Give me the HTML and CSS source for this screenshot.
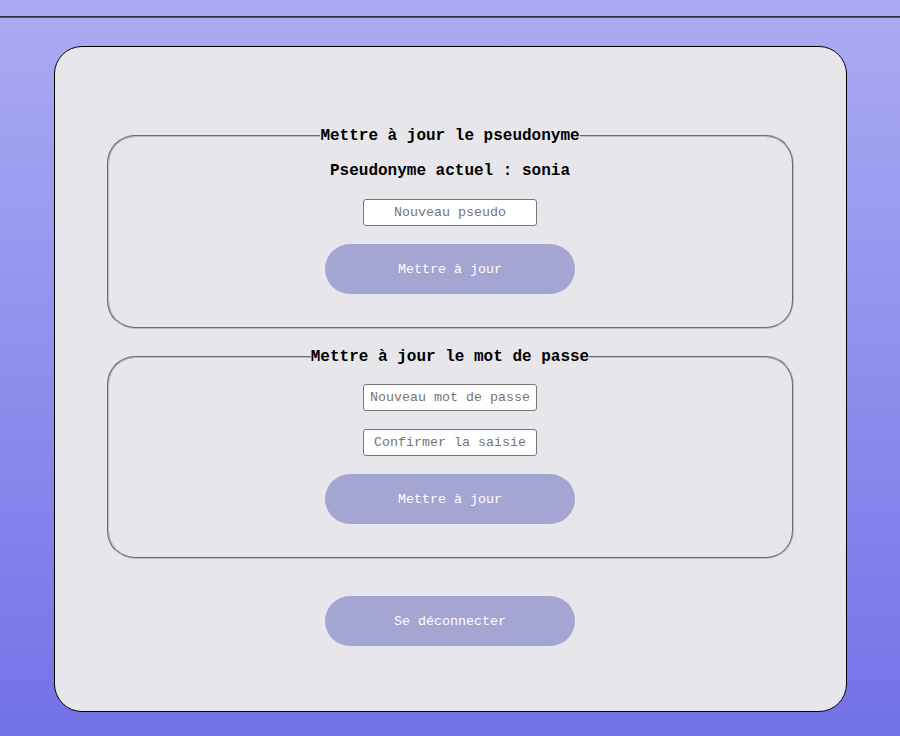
FILE: index.html
```html
<!DOCTYPE html>
<html lang="fr">
<head>
<meta charset="utf-8">
<title>Profil</title>
<link rel="stylesheet" href="styles.css">
</head>
<body>
<hr class="topline">
<main class="card">
  <fieldset class="group">
    <legend class="group-title">Mettre à jour le pseudonyme</legend>
    <p class="current">Pseudonyme actuel : sonia</p>
    <input class="field" type="text" placeholder="Nouveau pseudo">
    <button class="btn" type="button">Mettre à jour</button>
  </fieldset>
  <fieldset class="group">
    <legend class="group-title">Mettre à jour le mot de passe</legend>
    <input class="field" type="password" placeholder="Nouveau mot de passe">
    <input class="field" type="password" placeholder="Confirmer la saisie">
    <button class="btn" type="button">Mettre à jour</button>
  </fieldset>
  <button class="btn logout" type="button">Se déconnecter</button>
</main>
</body>
</html>
```
FILE: styles.css
```css
html {
  min-height: 100%;
  background: linear-gradient(to bottom, #ababf3 0%, #7272e8 100%);
}

body {
  margin: 0;
  min-height: 736px;
  font-family: "Liberation Mono", "Courier New", monospace;
}

.topline {
  margin: 16px 0 0;
  height: 0;
  border: none;
  border-top: 1px solid #2f2f3a;
  border-bottom: 1px solid #55556a;
}

.card {
  width: 791px;
  margin: 28px auto 0;
  border: 1px solid #000;
  border-radius: 28px;
  background: #e7e6eb;
  padding: 80px 0 65px;
  display: flex;
  flex-direction: column;
  align-items: center;
}

.group {
  box-sizing: border-box;
  width: 687px;
  margin: 0 0 18px;
  padding: 19px 0 33px;
  border: 2px groove #c0c0c0;
  border-radius: 28px;
  display: flex;
  flex-direction: column;
  align-items: center;
  gap: 18px;
}

.group + .group {
  margin-top: 1px;
}

.group-title {
  margin: 0 auto;
  padding: 0;
  font-size: 16px;
  font-weight: bold;
  line-height: 18px;
  color: #000;
}

.current {
  margin: -2px 0 0;
  font-size: 16px;
  font-weight: bold;
  line-height: 19px;
  color: #000;
}

.field {
  box-sizing: border-box;
  width: 174px;
  height: 27px;
  padding: 0 4px;
  border: 1px solid #767676;
  border-radius: 3px;
  background: #fff;
  font-family: "Liberation Mono", "Courier New", monospace;
  font-size: 13.33px;
  text-align: center;
}

.field::placeholder {
  color: #767676;
}

.btn {
  width: 250px;
  height: 50px;
  border: none;
  border-radius: 25px;
  background: #a5a5d4;
  color: #fff;
  font-family: "Liberation Mono", "Courier New", monospace;
  font-size: 13.33px;
}

.group + .group .field:first-of-type {
  margin-top: -1px;
}

.logout {
  margin-top: 19px;
}
```
